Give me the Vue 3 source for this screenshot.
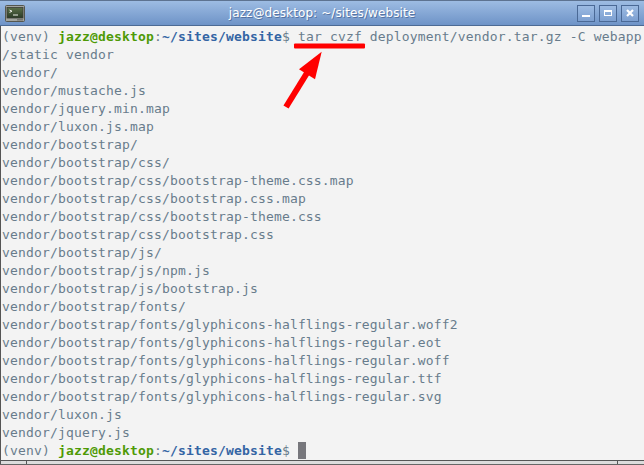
<script setup>
const lines = [
  '/static vendor','vendor/','vendor/mustache.js','vendor/jquery.min.map','vendor/luxon.js.map','vendor/bootstrap/','vendor/bootstrap/css/',
  'vendor/bootstrap/css/bootstrap-theme.css.map','vendor/bootstrap/css/bootstrap.css.map','vendor/bootstrap/css/bootstrap-theme.css','vendor/bootstrap/css/bootstrap.css',
  'vendor/bootstrap/js/','vendor/bootstrap/js/npm.js','vendor/bootstrap/js/bootstrap.js','vendor/bootstrap/fonts/',
  'vendor/bootstrap/fonts/glyphicons-halflings-regular.woff2','vendor/bootstrap/fonts/glyphicons-halflings-regular.eot','vendor/bootstrap/fonts/glyphicons-halflings-regular.woff',
  'vendor/bootstrap/fonts/glyphicons-halflings-regular.ttf','vendor/bootstrap/fonts/glyphicons-halflings-regular.svg','vendor/luxon.js','vendor/jquery.js'
]
</script>

<template>
  <div class="window">
    <header class="titlebar">
      <svg class="appicon" width="20" height="17" viewBox="0 0 20 17">
        <defs>
          <linearGradient id="scr" x1="0" y1="0" x2="0" y2="1">
            <stop offset="0" stop-color="#5c7049"/>
            <stop offset="1" stop-color="#2a3a26"/>
          </linearGradient>
        </defs>
        <rect x="0.5" y="0.5" width="19" height="16" rx="1" fill="#a3a5a0" stroke="#55574f"/>
        <rect x="2" y="2.5" width="16" height="10.5" fill="url(#scr)" stroke="#3a3c36" stroke-width="0.8"/>
        <path d="M4.5 5l2.5 1.2-2.5 1.2M8 10h5" stroke="#eef0ea" fill="none"/>
        <rect x="12" y="14.2" width="6" height="1.2" fill="#6b6d66"/>
      </svg>
      <span class="title">jazz@desktop: ~/sites/website</span>
      <div class="buttons">
        <span class="wbtn"><i class="min"></i></span>
        <span class="wbtn"><i class="max"></i></span>
        <span class="wbtn"><svg width="8" height="8" viewBox="0 0 8 8"><path d="M1 1l6 6M7 1l-6 6" stroke="#fff" stroke-width="2.2"/></svg></span>
      </div>
    </header>
    <main class="term">
      <div class="line"><span>(venv) </span><b class="g">jazz@desktop</b><span>:</span><b class="bl">~/sites/website</b><span>$ tar cvzf deployment/vendor.tar.gz -C webapp</span></div>
      <div v-for="l in lines" :key="l" class="line">{{ l }}</div>
      <div class="line"><span>(venv) </span><b class="g">jazz@desktop</b><span>:</span><b class="bl">~/sites/website</b><span>$ </span><i class="cursor"></i></div>
      <svg class="mark" width="90" height="80" viewBox="0 0 90 80">
        <rect x="14" y="3.5" width="71" height="5" rx="1" fill="#ff0000"/>
        <path d="M6 67L27 33" stroke="#ff0000" stroke-width="6" fill="none"/>
        <path d="M41.7 11.7L19 29.3 35 39.3z" fill="#ff0000"/>
      </svg>
    </main>
    <footer class="status">
      <span class="grip"></span>
      <span class="middle"></span>
      <span class="grip-end"></span>
    </footer>
  </div>
</template>

<style>
html, body { margin: 0; background: #f3f3f3; }
</style>

<style scoped>
.window { width: 644px; height: 465px; display: flex; flex-direction: column; overflow: hidden; background: #f3f3f3; }
.titlebar {
  box-sizing: border-box; height: 26px; flex: none; display: flex; align-items: center; padding: 0 5px;
  background: linear-gradient(#9dbce3, #6e93c7); border-top: 1px solid #5d7391; border-bottom: 1px solid #4c6a94;
  position: relative;
}
.appicon { flex: none; }
.title { position: absolute; left: 0; right: 0; text-align: center; font: 12px "DejaVu Sans", sans-serif; letter-spacing: 0.1px; color: #fff; text-shadow: 1px 1px 0 rgba(50, 75, 120, 0.55); }
.buttons { margin-left: auto; display: flex; gap: 4px; position: relative; }
.wbtn { box-sizing: border-box; width: 18px; height: 17px; border: 1px solid #4a6996; background: linear-gradient(#9cbbe3, #7c9fd0); display: flex; align-items: center; justify-content: center; }
.min { width: 8px; height: 2px; background: #fff; margin-top: 6px; }
.max { width: 6px; height: 3px; border: 1px solid #fff; border-top-width: 2px; }
.term { flex: 1; padding: 2px 0 0 1px; position: relative; border-left: 1px solid #555; }
.line { height: 18px; white-space: pre; font: 13px/18px "DejaVu Sans Mono", monospace; letter-spacing: 0.17px; color: #687c8c; }
.g { color: #4e9a06; }
.bl { color: #3465a4; }
.cursor { display: inline-block; width: 8px; height: 17px; background: #77777c; vertical-align: -4px; }
.mark { position: absolute; left: 279px; top: 14px; }
.status { box-sizing: border-box; height: 5px; flex: none; display: flex; border-top: 1px solid #555; border-bottom: 1px solid #666; background: #dcdcdc; }
.grip { width: 26px; border-left: 1px solid #555; box-sizing: border-box; }
.middle { flex: 1; border-left: 1px solid #555; }
.grip-end { width: 27px; border-left: 1px solid #555; box-sizing: border-box; }
</style>
